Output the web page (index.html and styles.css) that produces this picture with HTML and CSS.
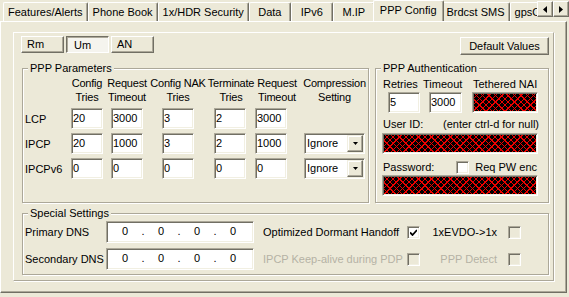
FILE: index.html
```html
<!DOCTYPE html>
<html lang="en">
<head>
  <meta charset="UTF-8" />
  <title>PPP Config</title>
  <link rel="stylesheet" href="styles.css">
</head>
<body>

<div class="tabbar">
  <div class="tabstrip">
    <div class="tab">Features/Alerts</div>
    <div class="tab">Phone Book</div>
    <div class="tab">1x/HDR Security</div>
    <div class="tab">Data</div>
    <div class="tab">IPv6</div>
    <div class="tab">M.IP</div>
    <div class="tab active">PPP Config</div>
    <div class="tab">Brdcst SMS</div>
    <div class="tab">gpsOne</div>
  </div>
  <div class="scroller">
    <div class="arrow"><svg width="4" height="7" viewBox="0 0 4 7"><path d="M4 0V7L0 3.5Z"/></svg></div>
    <div class="arrow"><svg width="4" height="7" viewBox="0 0 4 7"><path d="M0 0V7L4 3.5Z"/></svg></div>
  </div>
</div>

<div class="page">
  <div class="panel">
    <div class="toolbar">
      <div class="subtabs">
        <div class="btn sub">Rm</div>
        <div class="btn sub pressed">Um</div>
        <div class="btn sub">AN</div>
      </div>
      <div class="btn wide">Default Values</div>
    </div>

    <div class="groups">
      <fieldset class="group params">
        <legend>PPP Parameters</legend>
        <div class="grid">
          <span></span>
          <div class="hd"><span>Config<br>Tries</span></div>
          <div class="hd"><span>Request<br>Timeout</span></div>
          <div class="hd"><span>Config NAK<br>Tries</span></div>
          <div class="hd term"><span>Terminate<br>Tries</span></div>
          <div class="hd req2"><span>Request<br>Timeout</span></div>
          <div class="hd wide-hd"><span>Compression<br>Setting</span></div>

          <span class="rowlabel">LCP</span>
          <div class="edit">20</div>
          <div class="edit">3000</div>
          <div class="edit">3</div>
          <div class="edit">2</div>
          <div class="edit">3000</div>
          <span></span>

          <span class="rowlabel">IPCP</span>
          <div class="edit">20</div>
          <div class="edit">1000</div>
          <div class="edit">3</div>
          <div class="edit">2</div>
          <div class="edit">1000</div>
          <div class="combo"><span>Ignore</span><span class="drop"><svg width="5" height="3" viewBox="0 0 5 3"><path d="M0 0H5L2.5 3Z"/></svg></span></div>

          <span class="rowlabel">IPCPv6</span>
          <div class="edit">0</div>
          <div class="edit">0</div>
          <div class="edit">0</div>
          <div class="edit">0</div>
          <div class="edit">0</div>
          <div class="combo"><span>Ignore</span><span class="drop"><svg width="5" height="3" viewBox="0 0 5 3"><path d="M0 0H5L2.5 3Z"/></svg></span></div>
        </div>
      </fieldset>

      <fieldset class="group auth">
        <legend>PPP Authentication</legend>
        <div class="auth-body">
          <div class="auth-top">
            <div class="auth-col c1">
              <span class="lbl">Retries</span>
              <div class="edit">5</div>
            </div>
            <div class="auth-col c2">
              <span>Timeout</span>
              <div class="edit">3000</div>
            </div>
            <div class="auth-col c3">
              <span class="lbl">Tethered NAI</span>
              <div class="edit hatch"></div>
            </div>
          </div>
          <div class="auth-row user">
            <span>User ID:</span>
            <span>(enter ctrl-d for null)</span>
          </div>
          <div class="edit hatch long"></div>
          <div class="auth-row pass">
            <span>Password:</span>
            <span class="check-wrap"><span class="check white"></span>Req PW enc</span>
          </div>
          <div class="edit hatch long"></div>
        </div>
      </fieldset>
    </div>

    <fieldset class="group special">
      <legend>Special Settings</legend>
      <div class="special-grid">
        <span>Primary DNS</span>
        <div class="ip"><span>0</span><i>.</i><span>0</span><i>.</i><span>0</span><i>.</i><span>0</span></div>
        <span class="opt">Optimized Dormant Handoff</span>
        <span class="check white"><svg width="7" height="7" viewBox="0 0 7 7"><path d="M0 3.5L2.5 6L7 1" fill="none" stroke="#000" stroke-width="1.8"/></svg></span>
        <span class="opt2">1xEVDO-&gt;1x</span>
        <span class="check"></span>

        <span>Secondary DNS</span>
        <div class="ip"><span>0</span><i>.</i><span>0</span><i>.</i><span>0</span><i>.</i><span>0</span></div>
        <span class="opt disabled">IPCP Keep-alive during PDP</span>
        <span class="check"></span>
        <span class="opt2 disabled">PPP Detect</span>
        <span class="check"></span>
      </div>
    </fieldset>
  </div>
</div>

</body>
</html>
```

FILE: styles.css
```css
* {
  box-sizing: border-box;
}
body {
  margin: 0;
  width: 569px;
  height: 297px;
  overflow: hidden;
  background: #ece9d8;
  font-family: "Liberation Sans", Arial, sans-serif;
  font-size: 11px;
  color: #000;
}

/* outer tab control */
.tabbar {
  display: flex;
  height: 21px;
}
.tabstrip {
  display: flex;
  align-items: flex-start;
  width: 537px;
  overflow: hidden;
  padding-left: 3px;
}
.tab {
  flex: none;
  min-width: 42px;
  height: 19px;
  margin-top: 2px;
  padding: 0 4px;
  border: 1px solid #fff;
  border-bottom: 0;
  border-right-color: #716f64;
  border-radius: 2px 2px 0 0;
  box-shadow: inset -1px 0 #aca899;
  line-height: 18px;
  text-align: center;
  white-space: nowrap;
}
.tab.active {
  position: relative;
  z-index: 1;
  height: 22px;
  margin: 0 -2px;
  padding: 0 6px;
  background: #ece9d8;
}
.scroller {
  display: flex;
  padding-top: 1px;
}
.arrow {
  display: flex;
  align-items: center;
  justify-content: center;
  width: 16px;
  height: 16px;
  border: 1px solid;
  border-color: #fff #716f64 #716f64 #fff;
  box-shadow: inset -1px -1px #aca899;
}

.page {
  width: 567px;
  height: 272px;
  border: 1px solid;
  border-color: #fff #716f64 #716f64 #fff;
  box-shadow: inset -1px -1px #aca899;
  padding: 10px 0 0 12px;
}
.panel {
  width: 541px;
  height: 249px;
  border: 1px solid;
  border-color: #fff #aca899 #aca899 #fff;
  box-shadow: 1px 1px #fff;
  padding: 3px 4px 0 7px;
}

/* buttons */
.toolbar {
  display: flex;
  justify-content: space-between;
  align-items: flex-start;
  height: 19px;
}
.subtabs {
  display: flex;
  gap: 2px;
}
.btn {
  height: 17px;
  border: 1px solid;
  border-color: #fff #716f64 #716f64 #fff;
  box-shadow: inset -1px -1px #aca899;
  line-height: 15px;
  white-space: nowrap;
}
.btn.sub {
  width: 43px;
  padding-left: 5px;
}
.btn.pressed {
  border-color: #716f64 #fff #fff #716f64;
  box-shadow: inset 1px 1px #aca899;
  background: #f5f4ee;
  padding-left: 7px;
  line-height: 16px;
}
.btn.wide {
  width: 89px;
  height: 18px;
  margin-top: 1px;
  line-height: 16px;
  text-align: center;
}

/* group boxes */
.groups {
  display: flex;
  gap: 6px;
  margin: 7px 0 0 1px;
}
.group {
  min-width: 0;
  margin: 0;
  padding: 0;
  border: 1px solid #aca899;
  box-shadow: inset 1px 1px #fff, 1px 1px #fff;
}
.group legend {
  margin-left: 5px;
  padding: 0 2px;
  line-height: 13px;
  background: #ece9d8;
}
.params {
  width: 347px;
  height: 141px;
}
.auth {
  width: 174px;
  height: 141px;
}
.special {
  width: 527px;
  height: 68px;
  margin: 4px 0 0 1px;
}

/* edit boxes */
.edit {
  width: 32px;
  height: 21px;
  padding-left: 1px;
  border: 1px solid;
  border-color: #aca899 #fff #fff #aca899;
  box-shadow: inset 1px 1px #716f64, inset -1px -1px #f1efe2;
  background: #fff;
  line-height: 19px;
  white-space: nowrap;
}
.hatch {
  background-color: #000;
  background-image:
    repeating-linear-gradient(45deg, #e00 0 1px, transparent 1px 4.5px),
    repeating-linear-gradient(-45deg, #e00 0 1px, transparent 1px 4.5px);
}

/* PPP parameters */
.grid {
  display: grid;
  grid-template-columns: 46px 40px 51px 52px 41px 49px 61px;
  grid-template-rows: 28px 21px 21px 21px;
  row-gap: 4px;
  align-items: center;
  padding: 1px 0 0 2px;
}
.hd {
  display: flex;
  justify-content: center;
  width: 32px;
  line-height: 14px;
  letter-spacing: -0.2px;
  text-align: center;
  white-space: nowrap;
}
.hd.term {
  margin-left: 1px;
}
.hd.req2 {
  margin-left: 6px;
}
.hd.wide-hd {
  width: 61px;
}
.combo {
  display: flex;
  justify-content: space-between;
  width: 61px;
  height: 21px;
  padding-left: 2px;
  border: 1px solid;
  border-color: #aca899 #fff #fff #aca899;
  box-shadow: inset 1px 1px #716f64, inset -1px -1px #f1efe2;
  background: #fff;
  line-height: 19px;
}
.drop {
  display: flex;
  align-items: center;
  justify-content: center;
  width: 16px;
  height: 17px;
  margin: 1px;
  border: 1px solid;
  border-color: #f1efe2 #716f64 #716f64 #f1efe2;
  box-shadow: inset -1px -1px #aca899, inset 1px 1px #fff;
  background: #ece9d8;
}

/* PPP authentication */
.auth-body {
  padding: 3px 9px 0 6px;
}
.auth-top {
  display: flex;
}
.auth-col {
  display: flex;
  flex-direction: column;
  gap: 1px;
  line-height: 13px;
}
.auth-col.c1 {
  width: 41px;
}
.auth-col.c2 {
  width: 49px;
}
.auth-col.c3 {
  width: 66px;
}
.auth-col .lbl {
  margin-left: 1px;
}
.auth-col.c1 .edit,
.auth-col.c2 .edit {
  margin-left: 6px;
}
.auth-col.c2 .edit {
  width: 33px;
}
.auth-col.c3 .edit {
  width: 66px;
}
.auth-row {
  display: flex;
  justify-content: space-between;
  align-items: center;
  padding-left: 1px;
  line-height: 13px;
}
.auth-row.user {
  margin: 5px 0 2px;
}
.auth-row.pass {
  height: 14px;
  margin: 6px 0 1px;
}
.check-wrap {
  display: flex;
  align-items: center;
  gap: 6px;
  padding-right: 2px;
}
.edit.long {
  width: 156px;
}

/* checkboxes */
.check {
  display: flex;
  align-items: center;
  justify-content: center;
  width: 13px;
  height: 13px;
  border: 1px solid;
  border-color: #aca899 #fff #fff #aca899;
  box-shadow: inset 1px 1px #716f64, inset -1px -1px #f1efe2;
  background: #ece9d8;
}
.check.white {
  background: #fff;
}

/* special settings */
.special-grid {
  display: grid;
  grid-template-columns: 81px 148px 153px 13px 88px 13px;
  grid-template-rows: 22px 22px;
  row-gap: 5px;
  align-items: center;
  padding: 1px 0 0 2px;
  white-space: nowrap;
}
.ip {
  display: flex;
  height: 22px;
  padding-left: 7px;
  border: 1px solid;
  border-color: #aca899 #fff #fff #aca899;
  box-shadow: inset 1px 1px #716f64, inset -1px -1px #f1efe2;
  background: #fff;
  line-height: 18px;
}
.ip span {
  width: 22px;
  text-align: center;
}
.ip i {
  width: 14px;
  font-style: normal;
  text-align: center;
}
.opt {
  padding-left: 9px;
}
.opt2 {
  padding-right: 11px;
  text-align: right;
}
.disabled {
  color: #b5b2a5;
}
```
